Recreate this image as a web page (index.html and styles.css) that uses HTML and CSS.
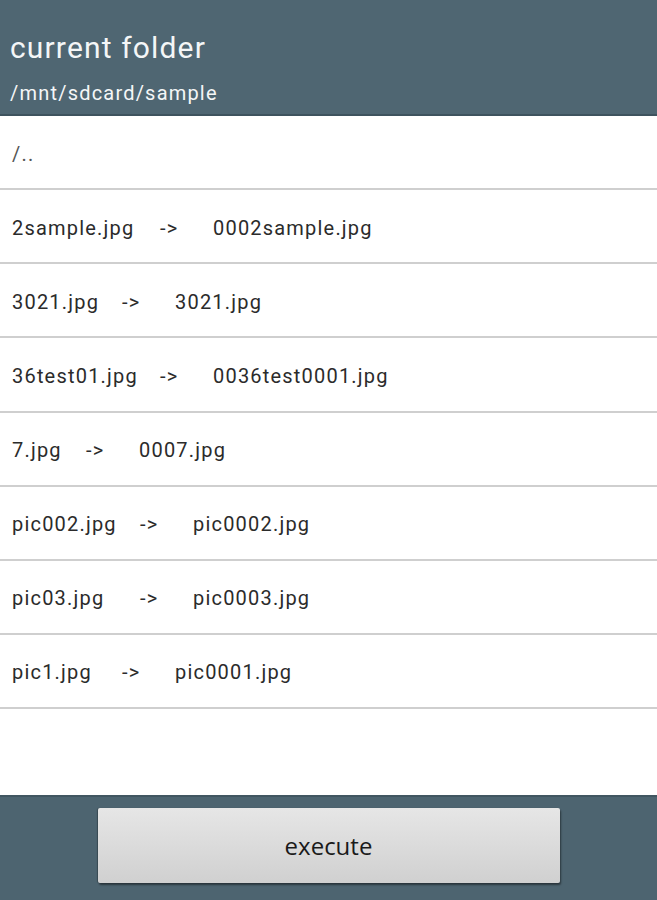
FILE: index.html
```html
<!DOCTYPE html>
<html>
<head>
<meta charset="utf-8">
<title>current folder</title>
<link rel="stylesheet" href="styles.css">
</head>
<body>
<div class="app">
  <header class="header">
    <div class="title">current folder</div>
    <div class="path">/mnt/sdcard/sample</div>
  </header>
  <ul class="list">
    <li class="row"><span class="up">/..</span></li>
    <li class="row"><span class="src s148">2sample.jpg</span><span class="arr">-&gt;</span><span class="dst">0002sample.jpg</span></li>
    <li class="row"><span class="src s110">3021.jpg</span><span class="arr">-&gt;</span><span class="dst">3021.jpg</span></li>
    <li class="row"><span class="src s148">36test01.jpg</span><span class="arr">-&gt;</span><span class="dst">0036test0001.jpg</span></li>
    <li class="row"><span class="src s74">7.jpg</span><span class="arr">-&gt;</span><span class="dst">0007.jpg</span></li>
    <li class="row"><span class="src s128">pic002.jpg</span><span class="arr">-&gt;</span><span class="dst">pic0002.jpg</span></li>
    <li class="row"><span class="src s128">pic03.jpg</span><span class="arr">-&gt;</span><span class="dst">pic0003.jpg</span></li>
    <li class="row"><span class="src s110">pic1.jpg</span><span class="arr">-&gt;</span><span class="dst">pic0001.jpg</span></li>
  </ul>
  <footer class="footer">
    <button class="exec">execute</button>
  </footer>
</div>
</body>
</html>
```
FILE: styles.css
```css
html, body {
  margin: 0;
  padding: 0;
  background: #ffffff;
}
.app {
  width: 657px;
  height: 900px;
  display: flex;
  flex-direction: column;
  font-family: Roboto, "Liberation Sans", sans-serif;
}
.header {
  height: 116px;
  box-sizing: border-box;
  background: #4f6672;
  border-bottom: 2px solid #3e535e;
  padding: 30px 0 0 10px;
  color: #f4f6f7;
}
.title {
  font-size: 30px;
  line-height: 36px;
  letter-spacing: 1.15px;
}
.path {
  margin-top: 15px;
  font-size: 20px;
  line-height: 24px;
  letter-spacing: 1.2px;
}
.list {
  list-style: none;
  margin: 0;
  padding: 0;
  flex: 1;
}
.row {
  height: 74.14px;
  box-sizing: border-box;
  border-bottom: 2px solid #cfcfcf;
  display: flex;
  align-items: center;
  padding: 3px 0 0 12px;
  color: #2b2b2b;
  font-size: 20px;
  letter-spacing: 1.2px;
  white-space: nowrap;
}
.up {
  color: #555;
}
.src { display: inline-block; }
.s74 { width: 74px; }
.s110 { width: 110px; }
.s128 { width: 128px; }
.s148 { width: 148px; }
.arr {
  display: inline-block;
  width: 53px;
}
.footer {
  height: 105px;
  box-sizing: border-box;
  background: #4d6470;
  border-top: 2px solid #415661;
  display: flex;
  justify-content: center;
  padding-top: 11px;
}
.exec {
  width: 462px;
  height: 75px;
  border: none;
  border-radius: 2px;
  background: linear-gradient(#e6e6e6, #d0d0d0);
  box-shadow: 1px 2px 2px rgba(0, 0, 0, 0.45), -1px 0 1px rgba(0, 0, 0, 0.25);
  font-family: "Open Sans", "DejaVu Sans", sans-serif;
  font-size: 24px;
  color: #1a1a1a;
  padding: 0;
}
```
